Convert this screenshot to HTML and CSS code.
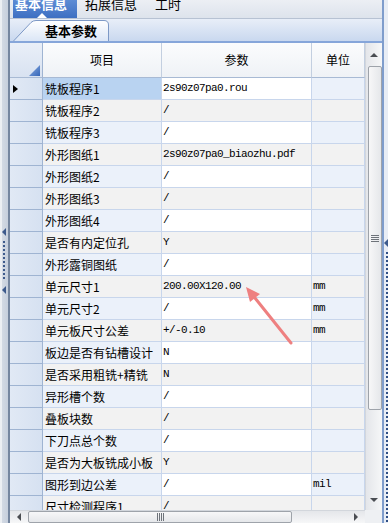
FILE: index.html
```html
<!DOCTYPE html>
<html lang="zh-CN">
<head>
    <meta charset="UTF-8">
    <title>基本信息</title>
    <link rel="stylesheet" href="styles.css">
</head>
<body>
    <div class="app">
        <!-- left splitter -->
        <div class="split-left">
            <span class="split-arrow"></span>
            <span class="split-dots"></span>
            <span class="split-arrow"></span>
        </div>

        <div class="main">
            <div class="topnav">
                <div class="navtab active"><span>基本信息</span><i class="notch"></i></div>
                <div class="navtab"><span>拓展信息</span></div>
                <div class="navtab"><span>工时</span></div>
            </div>

            <div class="subtabs">
                <div class="subtab">
                    <svg class="subtab-bg" width="96" height="21" viewBox="0 0 96 21">
                        <defs>
                            <linearGradient id="tabfill" x1="0" y1="0" x2="0" y2="1">
                                <stop offset="0" stop-color="#ffffff"/>
                                <stop offset="1" stop-color="#dbe6f6"/>
                            </linearGradient>
                        </defs>
                        <path d="M0.5,21 L18,2.5 Q20,0.5 23,0.5 L91,0.5 Q95.5,0.5 95.5,5 L95.5,21" fill="url(#tabfill)" stroke="#7d99c6"/>
                    </svg>
                    <span>基本参数</span>
                </div>
            </div>
            <div class="bluebar"></div>

            <div class="gridwrap">
                <div class="rows">
                    <div class="row head">
                        <div class="rh corner"><i class="corner-tri"></i></div>
                        <div class="hc">项目</div>
                        <div class="hc">参数</div>
                        <div class="hc">单位</div>
                    </div>

                    <div class="row odd current">
                        <div class="rh"><i class="cur"></i></div>
                        <div class="name">铣板程序1</div>
                        <div class="val">2s90z07pa0.rou</div>
                        <div class="unit"></div>
                    </div>
                    <div class="row even">
                        <div class="rh"></div><div class="name">铣板程序2</div><div class="val">/</div><div class="unit"></div>
                    </div>
                    <div class="row odd">
                        <div class="rh"></div><div class="name">铣板程序3</div><div class="val">/</div><div class="unit"></div>
                    </div>
                    <div class="row even">
                        <div class="rh"></div><div class="name">外形图纸1</div><div class="val">2s90z07pa0_biaozhu.pdf</div><div class="unit"></div>
                    </div>
                    <div class="row odd">
                        <div class="rh"></div><div class="name">外形图纸2</div><div class="val">/</div><div class="unit"></div>
                    </div>
                    <div class="row even">
                        <div class="rh"></div><div class="name">外形图纸3</div><div class="val">/</div><div class="unit"></div>
                    </div>
                    <div class="row odd">
                        <div class="rh"></div><div class="name">外形图纸4</div><div class="val">/</div><div class="unit"></div>
                    </div>
                    <div class="row even">
                        <div class="rh"></div><div class="name">是否有内定位孔</div><div class="val">Y</div><div class="unit"></div>
                    </div>
                    <div class="row odd">
                        <div class="rh"></div><div class="name">外形露铜图纸</div><div class="val">/</div><div class="unit"></div>
                    </div>
                    <div class="row even">
                        <div class="rh"></div><div class="name">单元尺寸1</div><div class="val">200.00X120.00</div><div class="unit">mm</div>
                    </div>
                    <div class="row odd">
                        <div class="rh"></div><div class="name">单元尺寸2</div><div class="val">/</div><div class="unit">mm</div>
                    </div>
                    <div class="row even">
                        <div class="rh"></div><div class="name">单元板尺寸公差</div><div class="val">+/-0.10</div><div class="unit">mm</div>
                    </div>
                    <div class="row odd">
                        <div class="rh"></div><div class="name">板边是否有钻槽设计</div><div class="val">N</div><div class="unit"></div>
                    </div>
                    <div class="row even">
                        <div class="rh"></div><div class="name">是否采用粗铣+精铣</div><div class="val">N</div><div class="unit"></div>
                    </div>
                    <div class="row odd">
                        <div class="rh"></div><div class="name">异形槽个数</div><div class="val">/</div><div class="unit"></div>
                    </div>
                    <div class="row even">
                        <div class="rh"></div><div class="name">叠板块数</div><div class="val">/</div><div class="unit"></div>
                    </div>
                    <div class="row odd">
                        <div class="rh"></div><div class="name">下刀点总个数</div><div class="val">/</div><div class="unit"></div>
                    </div>
                    <div class="row even">
                        <div class="rh"></div><div class="name">是否为大板铣成小板</div><div class="val">Y</div><div class="unit"></div>
                    </div>
                    <div class="row odd">
                        <div class="rh"></div><div class="name">图形到边公差</div><div class="val">/</div><div class="unit">mil</div>
                    </div>
                    <div class="row even">
                        <div class="rh"></div><div class="name">尺寸检测程序1</div><div class="val">/</div><div class="unit"></div>
                    </div>
                </div>

                <!-- vertical scrollbar -->
                <div class="vscroll">
                    <div class="sb-btn"><i class="tri-up"></i></div>
                    <div class="vthumb"><i class="grip-h"></i></div>
                    <div class="sb-track"></div>
                    <div class="sb-btn"><i class="tri-down"></i></div>
                </div>

                <!-- horizontal scrollbar -->
                <div class="hscroll">
                    <div class="sb-btn h"><i class="tri-left"></i></div>
                    <div class="hthumb"><i class="grip-v"></i></div>
                    <div class="sb-track"></div>
                    <div class="sb-btn h"><i class="tri-right"></i></div>
                </div>
                <div class="sb-corner"></div>
            </div>
        </div>

        <!-- right splitter -->
        <div class="split-right">
            <span class="split-arrow"></span>
            <span class="split-dots"></span>
        </div>
    </div>

    <!-- annotation arrow drawn over the grid -->
    <svg class="note" width="388" height="523" viewBox="0 0 388 523">
        <line x1="291" y1="343" x2="255" y2="298" stroke="#ee8080" stroke-width="3" stroke-linecap="round"/>
        <polygon points="246,287 260,294 250,302" fill="#ee8080"/>
    </svg>
</body>
</html>
```

FILE: styles.css
```css
* {
    box-sizing: border-box;
}

html, body {
    margin: 0;
    padding: 0;
}

body {
    width: 388px;
    height: 523px;
    overflow: hidden;
    position: relative;
    font-family: "Noto Sans CJK SC", "Noto Sans", sans-serif;
    font-size: 12px;
    color: #000;
    background: #dfe6f1;
}

.app {
    display: flex;
    height: 523px;
}

/* splitters */
.split-left {
    width: 10px;
    flex: none;
    display: flex;
    flex-direction: column;
    align-items: flex-start;
    padding: 228px 0 0 2px;
    background: linear-gradient(to right, #eceff3 0, #eceff3 2px, #d3dae4 2px, #c6cfdc 8px, #75869f 8px, #75869f 10px);
}

.split-arrow {
    width: 0;
    height: 0;
    border-right: 4px solid #3d5a8c;
    border-top: 4px solid transparent;
    border-bottom: 4px solid transparent;
}

.split-left .split-dots {
    width: 2px;
    height: 40px;
    margin: 5px 0 5px 1px;
    background: repeating-linear-gradient(#3d5a8c 0, #3d5a8c 2px, transparent 2px, transparent 4px);
}

.split-right {
    width: 6px;
    flex: none;
    display: flex;
    flex-direction: column;
    align-items: flex-start;
    padding: 239px 0 0 2px;
    background: linear-gradient(to right, #7f9dcc 0, #7f9dcc 2px, #e8edf5 2px);
}

.split-right .split-dots {
    width: 2px;
    flex: 1;
    margin: 5px 0 0 2px;
    background: repeating-linear-gradient(#2f4f86 0, #2f4f86 2px, transparent 2px, transparent 4px);
}

.main {
    flex: 1;
    min-width: 0;
    display: flex;
    flex-direction: column;
}

/* top tabs */
.topnav {
    height: 19px;
    flex: none;
    display: flex;
    padding-left: 3px;
    border-bottom: 1px solid #b7c2d3;
    background: linear-gradient(#eceff4, #dde3ec);
}

.navtab {
    position: relative;
    height: 18px;
    font-size: 13px;
    overflow: hidden;
}

.navtab span {
    display: block;
    line-height: 18px;
    margin-top: -5px;
}

.navtab.active {
    width: 64px;
    padding-left: 2px;
    color: #fff;
    font-weight: bold;
    background: linear-gradient(#5d8cd5, #3d6fc2);
}

.navtab:nth-child(2) {
    width: 70px;
    margin-left: 8px;
}

.notch {
    position: absolute;
    left: 24px;
    bottom: 0;
    width: 0;
    height: 0;
    border-left: 5px solid transparent;
    border-right: 5px solid transparent;
    border-bottom: 5px solid #fff;
}

/* second tab strip */
.subtabs {
    height: 22px;
    flex: none;
    display: flex;
    align-items: flex-end;
    padding-left: 3px;
    background: linear-gradient(#e8eef8, #c9d8ef);
}

.subtab {
    position: relative;
    width: 96px;
    height: 21px;
    font-size: 13px;
    font-weight: bold;
}

.subtab-bg {
    position: absolute;
    left: 0;
    top: 0;
}

.subtab span {
    position: relative;
    display: block;
    padding-left: 32px;
    line-height: 21px;
}

.bluebar {
    height: 2px;
    flex: none;
    background: #86a6da;
}

/* grid */
.gridwrap {
    flex: 1;
    display: grid;
    grid-template-columns: 355px 17px;
    grid-template-rows: 467px 13px;
    background: #fff;
}

.rows {
    overflow: hidden;
}

.row {
    display: grid;
    grid-template-columns: 33px 119px 150px 53px;
    height: 22px;
}

.row > div {
    border-bottom: 1px solid #c8d6ec;
    border-right: 1px solid #c8d6ec;
    white-space: nowrap;
    overflow: hidden;
    line-height: 21px;
}

.row > .rh {
    display: flex;
    align-items: center;
    padding-left: 3px;
    background: linear-gradient(to right, #e1e9f5, #d6e1f1);
    border-bottom: 1px solid #9fb4d2;
    border-right: 1px solid #9fb4d2;
}

.cur {
    width: 0;
    height: 0;
    border-left: 5px solid #000;
    border-top: 4px solid transparent;
    border-bottom: 4px solid transparent;
}

.name {
    padding-left: 2px;
}

.val {
    padding-left: 1px;
    font-family: "Liberation Mono", "DejaVu Sans Mono", monospace;
    font-size: 11px;
    letter-spacing: -0.6px;
}

.unit {
    padding-left: 1px;
    font-family: "Liberation Mono", "DejaVu Sans Mono", monospace;
    font-size: 11px;
    letter-spacing: -0.6px;
}

.odd .name,
.odd .unit {
    background: #ebf1fa;
}

.odd .val {
    background: #fff;
}

.even .name,
.even .val,
.even .unit {
    background: #f2f2f2;
}

.current .name {
    background: #b9d3f1;
}

/* header */
.row.head {
    height: 35px;
}

.row.head > div {
    line-height: 34px;
    text-align: center;
    border-bottom: 1px solid #a8bad4;
    border-right: 1px solid #c3cfe0;
    background: linear-gradient(#fbfcfd, #eff2f6);
}

.row.head > .corner {
    justify-content: flex-end;
    align-items: flex-end;
    padding: 0 2px 1px 0;
    border-right: 1px solid #9fb4d2;
    background: linear-gradient(#e9eff8, #d8e2f1);
}

.corner-tri {
    width: 11px;
    height: 11px;
    background: linear-gradient(135deg, #8fb0e4, #3566b8);
    clip-path: polygon(100% 0, 100% 100%, 0 100%);
}

/* scrollbars */
.vscroll {
    display: flex;
    flex-direction: column;
    align-items: center;
    border-left: 1px solid #d2d6dc;
    background: linear-gradient(to right, #e4e6ea, #f6f7f8);
}

.sb-btn {
    width: 100%;
    height: 23px;
    flex: none;
    display: flex;
    align-items: center;
    justify-content: center;
}

.vscroll .sb-btn:last-child {
    height: 20px;
}

.sb-track {
    flex: 1;
}

.vthumb {
    width: 14px;
    height: 344px;
    flex: none;
    margin-left: 1px;
    display: flex;
    align-items: center;
    justify-content: center;
    border: 1px solid #9ea3aa;
    border-radius: 2px;
    background: linear-gradient(to right, #f7f7f8, #e5e7ea);
}

.grip-h {
    width: 8px;
    height: 7px;
    background: repeating-linear-gradient(#6e737a 0, #6e737a 1px, transparent 1px, transparent 2px);
}

.grip-v {
    width: 7px;
    height: 8px;
    background: repeating-linear-gradient(to right, #6e737a 0, #6e737a 1px, transparent 1px, transparent 2px);
}

.tri-up {
    border-left: 4px solid transparent;
    border-right: 4px solid transparent;
    border-bottom: 4px solid #4a4d52;
}

.tri-down {
    border-left: 4px solid transparent;
    border-right: 4px solid transparent;
    border-top: 4px solid #4a4d52;
}

.tri-left {
    border-top: 4px solid transparent;
    border-bottom: 4px solid transparent;
    border-right: 4px solid #4a4d52;
}

.tri-right {
    border-top: 4px solid transparent;
    border-bottom: 4px solid transparent;
    border-left: 4px solid #4a4d52;
}

.hscroll {
    display: flex;
    align-items: stretch;
    border-top: 1px solid #d2d6dc;
    background: linear-gradient(#e4e6ea, #f6f7f8);
}

.sb-btn.h {
    width: 18px;
    height: auto;
}

.hthumb {
    width: 264px;
    flex: none;
    display: flex;
    align-items: center;
    justify-content: center;
    border: 1px solid #9ea3aa;
    border-radius: 2px;
    background: linear-gradient(#f7f7f8, #e5e7ea);
}

.sb-corner {
    background: #eef0f3;
}

.note {
    position: absolute;
    left: 0;
    top: 0;
    pointer-events: none;
}
```
